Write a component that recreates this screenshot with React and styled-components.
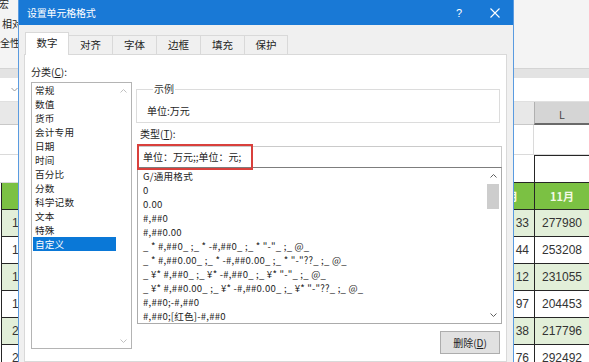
import React from 'react';
import styled, { createGlobalStyle } from 'styled-components';

const GlobalStyle = createGlobalStyle`
  html, body { margin: 0; padding: 0; background: #fff; overflow: hidden; }
  body { font-family: "Noto Sans CJK SC", "Noto Sans", sans-serif; }
  #root { width: 589px; height: 362px; }
`;

const CJK = '"Noto Sans CJK SC", "Noto Sans", sans-serif';
const NUM = '"Liberation Sans", Arial, sans-serif';

/* ---------- page ---------- */
const Screen = styled.div`
  display: flex;
  width: 589px;
  height: 362px;
  overflow: hidden;
  background: #fff;
`;

/* ---------- spreadsheet strips ---------- */
const SheetStrip = styled.div`
  width: ${p => p.$w}px;
  flex: none;
  display: flex;
  flex-direction: column;
  overflow: hidden;
  background: #fff;
`;

const Ribbon = styled.div`
  height: 68px;
  flex: none;
  background: #f4f4f4;
  font-family: ${CJK};
  font-size: 10px;
  line-height: 19.5px;
  color: #222;
  white-space: nowrap;
  overflow: hidden;
`;

const RibbonLine = styled.div`
  margin-left: ${p => p.$shift}px;
  &:first-child { margin-top: -6px; }
`;

const RibbonEdge = styled.div`
  height: 10px;
  flex: none;
  box-sizing: border-box;
  background: #e3e3e3;
  border-top: 1px solid #d4d4d4;
`;

const FormulaBar = styled.div`
  height: 24px;
  flex: none;
  box-sizing: border-box;
  background: #fff;
  border-bottom: 1px solid #e0e0e0;
  display: flex;
  align-items: center;
  justify-content: flex-end;
`;

const ColHeaderRow = styled.div`
  height: 23px;
  flex: none;
  display: flex;
`;

const ColHeader = styled.div`
  width: ${p => p.$w}px;
  flex: ${p => (p.$w ? 'none' : '1')};
  box-sizing: border-box;
  background: ${p => (p.$active ? '#d5d5d5' : '#e8e8e8')};
  border-bottom: ${p => (p.$active ? '2px solid #6a6a6a' : '1px solid #c8c8c8')};
  border-left: ${p => (p.$active ? '1px solid #b0b0b0' : 'none')};
  display: flex;
  align-items: flex-end;
  justify-content: center;
  padding-bottom: 2px;
  font-family: ${NUM};
  font-size: 10px;
  color: #444;
`;

const PlainRow = styled.div`
  height: ${p => p.$h}px;
  flex: none;
  box-sizing: border-box;
  display: flex;
  border-bottom: 1px solid #dadada;
`;

const PlainCell = styled.div`
  width: ${p => p.$w}px;
  flex: ${p => (p.$w ? 'none' : '1')};
  box-sizing: border-box;
  border-right: ${p => (p.$divider ? '1px solid #dadada' : 'none')};
`;

const SheetTable = styled.div`
  display: grid;
  grid-template-columns: ${p => p.$cols};
  margin-left: ${p => p.$shift || 0}px;
  flex: none;
`;

const toneBg = { head: '#7bc143', band: '#e2efd9', plain: '#fff', blank: '#fff' };
const alignMap = { start: 'flex-start', center: 'center', end: 'flex-end' };

const Cell = styled.div`
  height: ${p => p.$h}px;
  box-sizing: border-box;
  display: flex;
  align-items: center;
  justify-content: ${p => alignMap[p.$align || 'center']};
  padding: 0 ${p => p.$padR || 0}px 0 ${p => p.$padL || 0}px;
  white-space: nowrap;
  overflow: hidden;
  font-family: ${p => (p.$tone === 'head' ? CJK : NUM)};
  font-size: ${p => (p.$tone === 'head' ? '11px' : '12px')};
  font-weight: ${p => (p.$tone === 'head' ? 700 : 400)};
  color: ${p => (p.$tone === 'head' ? '#f3f9e6' : '#333')};
  background: ${p => toneBg[p.$tone]};
  border-left: ${p => (p.$tone === 'blank' || p.$open ? 'none' : '1px solid #262626')};
  border-top: ${p => (p.$top ? '1px solid #262626' : 'none')};
  border-bottom: 1px solid #262626;
`;

const Fragment = styled.span`
  margin-left: ${p => p.$shift}px;
`;

/* ---------- dialog ---------- */
const Dialog = styled.div`
  width: 496px;
  flex: none;
  box-sizing: border-box;
  display: flex;
  flex-direction: column;
  background: #f0f0f0;
  border-left: 1px solid #5a9be0;
  border-right: 1px solid #5a9be0;
  font-family: ${CJK};
  font-size: 9.6px;
  line-height: 14px;
  color: #1e1e1e;
`;

const TitleBar = styled.div`
  height: 25px;
  flex: none;
  display: flex;
  align-items: center;
  background: #1979d6;
  color: #fff;
  padding-left: 8px;
`;

const TitleText = styled.div`
  flex: 1;
  font-size: 10px;
  letter-spacing: -0.2px;
`;

const TitleButton = styled.div`
  width: 36px;
  height: 25px;
  display: flex;
  align-items: center;
  justify-content: center;
  font-family: ${NUM};
  font-size: 11px;
  color: #fff;
`;

const DialogBody = styled.div`
  flex: 1;
  display: flex;
  flex-direction: column;
  padding: 8px 6px 0 5px;
`;

const TabStrip = styled.div`
  display: flex;
  align-items: flex-end;
  height: 22px;
  padding-left: 1px;
  margin-bottom: -1px;
  position: relative;
  z-index: 1;
`;

const Tab = styled.div`
  width: 44px;
  height: ${p => (p.$active ? 23 : 20)}px;
  box-sizing: border-box;
  display: flex;
  align-items: center;
  justify-content: center;
  padding-bottom: ${p => (p.$active ? 2 : 0)}px;
  background: ${p => (p.$active ? '#fff' : '#f0f0f0')};
  border: 1px solid #d9d9d9;
  border-bottom: ${p => (p.$active ? 'none' : '1px solid #d9d9d9')};
  border-right: ${p => (p.$last || p.$active ? '1px solid #d9d9d9' : 'none')};
  margin-right: ${p => (p.$active ? -1 : 0)}px;
  position: relative;
  z-index: ${p => (p.$active ? 2 : 1)};
  font-size: 10.5px;
  color: #1e1e1e;
`;

const Panel = styled.div`
  flex: 1;
  box-sizing: border-box;
  background: #fff;
  border: 1px solid #d9d9d9;
  padding: 10px 0 0 6px;
  display: grid;
  grid-template-columns: 101px 366px;
  grid-template-rows: 14px 1fr;
  column-gap: 4px;
  row-gap: 3px;
  align-items: start;
`;

const FieldLabel = styled.div`
  padding-left: ${p => p.$indent || 0}px;
  margin-top: ${p => p.$gap || 0}px;
  white-space: nowrap;
  font-size: 10px;
`;

const CategoryBox = styled.div`
  grid-column: 1;
  grid-row: 2;
  height: 267px;
  box-sizing: border-box;
  border: 1px solid #b4b4b4;
  background: #fff;
  display: flex;
`;

const ItemColumn = styled.div`
  flex: 1;
  display: flex;
  flex-direction: column;
  padding: ${p => p.$pad};
  overflow: hidden;
`;

const CategoryItem = styled.div`
  height: 14px;
  margin-left: 1px;
  padding-left: 2px;
  white-space: nowrap;
  letter-spacing: 0.2px;
  background: ${p => (p.$selected ? '#0a78d7' : 'transparent')};
  color: ${p => (p.$selected ? '#fff' : '#1e1e1e')};
`;

const FormatItem = styled.div`
  height: 14px;
  white-space: pre;
  letter-spacing: 0.2px;
  color: #1e1e1e;
`;

const ScrollTrack = styled.div`
  width: ${p => p.$w}px;
  flex: none;
  display: flex;
  flex-direction: column;
  align-items: center;
  background: #fff;
`;

const ScrollArrow = styled.div`
  height: ${p => p.$h}px;
  flex: none;
  display: flex;
  align-items: center;
  justify-content: center;
`;

const ScrollThumb = styled.div`
  width: 12px;
  height: 25px;
  flex: none;
  background: #cdcdcd;
`;

const ScrollSpacer = styled.div`
  flex: 1;
`;

const RightColumn = styled.div`
  grid-column: 2;
  grid-row: 2;
  display: flex;
  flex-direction: column;
`;

const SampleGroup = styled.fieldset`
  margin: 0 2px 0 0;
  min-width: 0;
  padding: 8px 10px 4px 10px;
  border: 1px solid #dcdcdc;
`;

const SampleLegend = styled.legend`
  margin-left: 6px;
  padding: 0 1px;
  font-size: 10px;
  line-height: 14px;
  color: #333;
`;

const SampleText = styled.div`
  height: 14px;
  font-size: 10px;
`;

const TypeInput = styled.div`
  position: relative;
  margin: 5px 0 0 1px;
  height: 21px;
  box-sizing: border-box;
  border: 1px solid #cacaca;
  border-bottom: none;
  background: #fff;
  display: flex;
  align-items: center;
  padding-left: 5px;
  white-space: nowrap;
  font-size: 10px;
`;

const Annotation = styled.div`
  position: absolute;
  left: -1px;
  top: -3px;
  width: 116px;
  height: 26px;
  box-sizing: border-box;
  border: 2px solid #d9403c;
`;

const FormatBox = styled.div`
  margin-left: 1px;
  height: 157px;
  box-sizing: border-box;
  border: 1px solid #ababab;
  border-top-color: #7d7d7d;
  background: #fff;
  display: flex;
`;

const ButtonRow = styled.div`
  margin-top: 7px;
  display: flex;
  justify-content: flex-end;
  padding-right: 2px;
`;

const PushButton = styled.div`
  width: 60px;
  height: 23px;
  box-sizing: border-box;
  background: #e1e1e1;
  border: 1px solid #adadad;
  display: flex;
  align-items: center;
  justify-content: center;
  font-size: 10px;
  color: #1e1e1e;
`;

/* ---------- icons ---------- */
const Chevron = ({ dir = 'up', color = '#606060' }) => (
  <svg width="7" height="4" viewBox="0 0 7 4">
    <polyline
      points={dir === 'up' ? '0.5,3.5 3.5,0.5 6.5,3.5' : '0.5,0.5 3.5,3.5 6.5,0.5'}
      fill="none"
      stroke={color}
      strokeWidth="1"
    />
  </svg>
);

const CloseIcon = () => (
  <svg width="10" height="10" viewBox="0 0 10 10">
    <path d="M0.5 0.5 L9.5 9.5 M9.5 0.5 L0.5 9.5" stroke="#fff" strokeWidth="1.1" fill="none" />
  </svg>
);

const NameBoxArrow = () => (
  <svg width="7" height="5" viewBox="0 0 7 5">
    <polyline points="0.5,1 3.5,4 6.5,1" fill="none" stroke="#9a9a9a" strokeWidth="1" />
  </svg>
);

/* ---------- data ---------- */
const categories = ['常规', '数值', '货币', '会计专用', '日期', '时间', '百分比', '分数', '科学记数', '文本', '特殊', '自定义'];

const formats = [
  'G/通用格式',
  '0',
  '0.00',
  '#,##0',
  '#,##0.00',
  '_ * #,##0_ ;_ * -#,##0_ ;_ * "-"_ ;_ @_',
  '_ * #,##0.00_ ;_ * -#,##0.00_ ;_ * "-"??_ ;_ @_',
  '_ ¥* #,##0_ ;_ ¥* -#,##0_ ;_ ¥* "-"_ ;_ @_',
  '_ ¥* #,##0.00_ ;_ ¥* -#,##0.00_ ;_ ¥* "-"??_ ;_ @_',
  '#,##0;-#,##0',
  '#,##0;[红色]-#,##0',
];

const tabs = ['数字', '对齐', '字体', '边框', '填充', '保护'];

/* only the parts of the sheet that are not hidden behind the dialog */
const leftDigits = ['1', '1', '1', '1', '2', '2'];
const kTails = ['33', '44', '12', '97', '38', '76'];
const lValues = ['277980', '253208', '231055', '204453', '217796', '292492'];

const DATA_H = 27;
const tone = i => (i % 2 === 0 ? 'band' : 'plain');

function LeftSheet() {
  return (
    <SheetStrip $w={18}>
      <Ribbon>
        <RibbonLine $shift={-1}>宏</RibbonLine>
        <RibbonLine $shift={2}>相对</RibbonLine>
        <RibbonLine $shift={0}>全性</RibbonLine>
      </Ribbon>
      <RibbonEdge />
      <FormulaBar>
        <NameBoxArrow />
      </FormulaBar>
      <ColHeaderRow>
        <ColHeader />
      </ColHeaderRow>
      <PlainRow $h={30} />
      <PlainRow $h={28} />
      <SheetTable $cols="17px" $shift={1}>
        <Cell $h={27} $tone="head" />
        {leftDigits.map((d, i) => (
          <Cell key={i} $h={DATA_H} $tone={tone(i)} $align="start" $padL={10}>{d}</Cell>
        ))}
      </SheetTable>
    </SheetStrip>
  );
}

function RightSheet() {
  return (
    <SheetStrip $w={75}>
      <Ribbon />
      <RibbonEdge />
      <FormulaBar />
      <ColHeaderRow>
        <ColHeader $w={20} />
        <ColHeader $w={55} $active>L</ColHeader>
      </ColHeaderRow>
      <PlainRow $h={30}>
        <PlainCell $w={20} $divider />
        <PlainCell />
      </PlainRow>
      <SheetTable $cols="20px 55px">
        <Cell $h={28} $tone="blank" />
        <Cell $h={28} $tone="plain" $top />
        <Cell $h={27} $tone="head" $open $align="start">
          <Fragment $shift={-7}>月</Fragment>
        </Cell>
        <Cell $h={27} $tone="head">11月</Cell>
        {lValues.map((v, i) => (
          <React.Fragment key={v}>
            <Cell $h={DATA_H} $tone={tone(i)} $open $align="end" $padR={5}>{kTails[i]}</Cell>
            <Cell $h={DATA_H} $tone={tone(i)}>{v}</Cell>
          </React.Fragment>
        ))}
      </SheetTable>
    </SheetStrip>
  );
}

function FormatDialog() {
  return (
    <Dialog>
      <TitleBar>
        <TitleText>设置单元格格式</TitleText>
        <TitleButton>?</TitleButton>
        <TitleButton><CloseIcon /></TitleButton>
      </TitleBar>
      <DialogBody>
        <TabStrip>
          {tabs.map((t, i) => (
            <Tab key={t} $active={i === 0} $last={i === tabs.length - 1}>{t}</Tab>
          ))}
        </TabStrip>
        <Panel>
          <FieldLabel>分类(<u>C</u>):</FieldLabel>
          <CategoryBox>
            <ItemColumn $pad="0">
              {categories.map(c => (
                <CategoryItem key={c} $selected={c === '自定义'}>{c}</CategoryItem>
              ))}
            </ItemColumn>
            <ScrollTrack $w={15}>
              <ScrollArrow $h={15}><Chevron dir="up" color="#c0c0c0" /></ScrollArrow>
              <ScrollSpacer />
              <ScrollArrow $h={15}><Chevron dir="down" color="#c0c0c0" /></ScrollArrow>
            </ScrollTrack>
          </CategoryBox>
          <RightColumn>
            <SampleGroup>
              <SampleLegend>示例</SampleLegend>
              <SampleText>单位:万元</SampleText>
            </SampleGroup>
            <FieldLabel $indent={4} $gap={4}>类型(<u>T</u>):</FieldLabel>
            <TypeInput>
              单位：万元;;单位：元;
              <Annotation />
            </TypeInput>
            <FormatBox>
              <ItemColumn $pad="1px 0 0 5px">
                {formats.map(f => (
                  <FormatItem key={f}>{f}</FormatItem>
                ))}
              </ItemColumn>
              <ScrollTrack $w={16}>
                <ScrollArrow $h={16}><Chevron dir="up" color="#606060" /></ScrollArrow>
                <ScrollThumb />
                <ScrollSpacer />
                <ScrollArrow $h={16}><Chevron dir="down" color="#606060" /></ScrollArrow>
              </ScrollTrack>
            </FormatBox>
            <ButtonRow>
              <PushButton>删除(<u>D</u>)</PushButton>
            </ButtonRow>
          </RightColumn>
        </Panel>
      </DialogBody>
    </Dialog>
  );
}

export default function App() {
  return (
    <>
      <GlobalStyle />
      <Screen>
        <LeftSheet />
        <FormatDialog />
        <RightSheet />
      </Screen>
    </>
  );
}
